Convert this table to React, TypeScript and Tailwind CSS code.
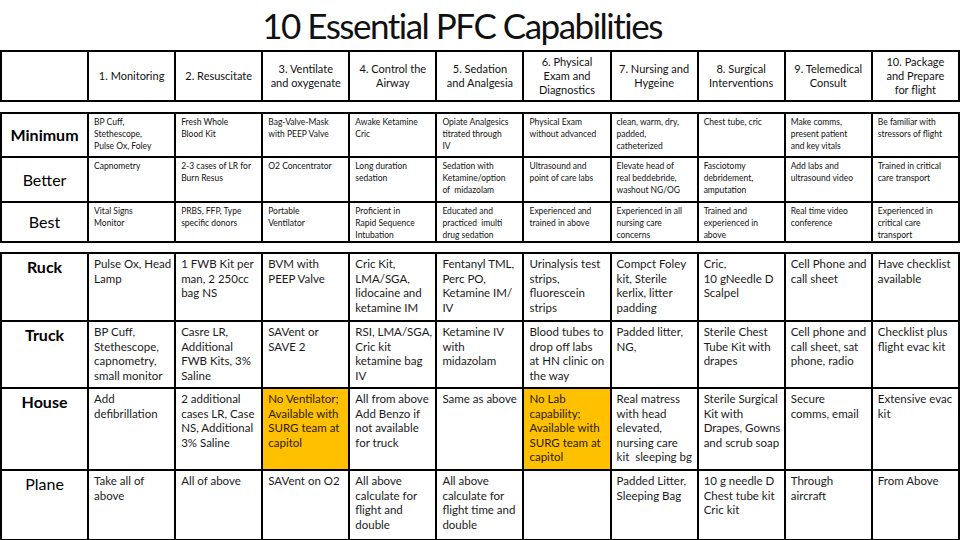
const header = [
  '',
  '1. Monitoring',
  '2. Resuscitate',
  '3. Ventilate|and oxygenate',
  '4. Control the|Airway',
  '5. Sedation|and Analgesia',
  '6. Physical|Exam and|Diagnostics',
  '7. Nursing and|Hygeine',
  '8. Surgical|Interventions',
  '9. Telemedical|Consult',
  '10. Package|and Prepare|for flight',
];

type Row = { label: string; bold?: boolean; h: string; cells: string[]; hl?: number[] };

const levels: Row[] = [
  {
    label: 'Minimum',
    bold: true,
    h: 'h-[44px]',
    cells: [
      'BP Cuff,|Stethescope,|Pulse Ox, Foley',
      'Fresh Whole|Blood Kit',
      'Bag-Valve-Mask|with PEEP Valve',
      'Awake Ketamine|Cric',
      'Opiate Analgesics|titrated through|IV',
      'Physical Exam|without advanced',
      'clean, warm, dry,|padded,|catheterized',
      'Chest tube, cric',
      'Make comms,|present patient|and key vitals',
      'Be familiar with|stressors of flight',
    ],
  },
  {
    label: 'Better',
    h: 'h-[45px]',
    cells: [
      'Capnometry',
      '2-3 cases of LR for|Burn Resus',
      'O2 Concentrator',
      'Long duration|sedation',
      'Sedation with|Ketamine/option|of  midazolam',
      'Ultrasound and|point of care labs',
      'Elevate head of|real beddebride,|washout NG/OG',
      'Fasciotomy|debridement,|amputation',
      'Add labs and|ultrasound video',
      'Trained in critical|care transport',
    ],
  },
  {
    label: 'Best',
    h: 'h-[40px]',
    cells: [
      'Vital Signs|Monitor',
      'PRBS, FFP, Type|specific donors',
      'Portable|Ventilator',
      'Proficient in|Rapid Sequence|Intubation',
      'Educated and|practiced  imulti|drug sedation',
      'Experienced and|trained in above',
      'Experienced in all|nursing care|concerns',
      'Trained and|experienced in|above',
      'Real time video|conference',
      'Experienced in|critical care|transport',
    ],
  },
];

const settings: Row[] = [
  {
    label: 'Ruck',
    bold: true,
    h: 'h-[68px]',
    cells: [
      'Pulse Ox, Head|Lamp',
      '1 FWB Kit per|man, 2 250cc|bag NS',
      'BVM with|PEEP Valve',
      'Cric Kit,|LMA/SGA,|lidocaine and|ketamine IM',
      'Fentanyl TML,|Perc PO,|Ketamine IM/|IV',
      'Urinalysis test|strips,|fluorescein|strips',
      'Compct Foley|kit, Sterile|kerlix, litter|padding',
      'Cric,|10 gNeedle D|Scalpel',
      'Cell Phone and|call sheet',
      'Have checklist|available',
    ],
  },
  {
    label: 'Truck',
    bold: true,
    h: 'h-[67px]',
    cells: [
      'BP Cuff,|Stethescope,|capnometry,|small monitor',
      'Casre LR,|Additional|FWB Kits, 3%|Saline',
      'SAVent or|SAVE 2',
      'RSI, LMA/SGA,|Cric kit|ketamine bag|IV',
      'Ketamine IV|with|midazolam',
      'Blood tubes to|drop off labs|at HN clinic on|the way',
      'Padded litter,|NG,',
      'Sterile Chest|Tube Kit with|drapes',
      'Cell phone and|call sheet, sat|phone, radio',
      'Checklist plus|flight evac kit',
    ],
  },
  {
    label: 'House',
    bold: true,
    h: 'h-[82px]',
    hl: [2, 5],
    cells: [
      'Add|defibrillation',
      '2 additional|cases LR, Case|NS, Additional|3% Saline',
      'No Ventilator;|Available with|SURG team at|capitol',
      'All from above|Add Benzo if|not available|for truck',
      'Same as above',
      'No Lab|capability;|Available with|SURG team at|capitol',
      'Real matress|with head|elevated,|nursing care|kit  sleeping bg',
      'Sterile Surgical|Kit with|Drapes, Gowns|and scrub soap',
      'Secure|comms, email',
      'Extensive evac|kit',
    ],
  },
  {
    label: 'Plane',
    h: 'h-[70px]',
    cells: [
      'Take all of|above',
      'All of above',
      'SAVent on O2',
      'All above|calculate for|flight and|double',
      'All above|calculate for|flight time and|double',
      '',
      'Padded Litter,|Sleeping Bag',
      '10 g needle D|Chest tube kit|Cric kit',
      'Through|aircraft',
      'From Above',
    ],
  },
];

function Lines({ text }: { text: string }) {
  const parts = text.split('|');
  return (
    <>
      {parts.map((p, i) => (
        <div key={i} className="whitespace-pre">
          {p}
        </div>
      ))}
    </>
  );
}

export default function App() {
  return (
    <div className="w-[960px] h-[540px] bg-white text-black overflow-hidden font-['Lato',_'Liberation_Sans',_sans-serif]">
      {/* Title */}
      <div className="h-[50px] flex items-center justify-center pr-[36px]">
        <h1 className="text-[35px] leading-none tracking-[-1.5px] text-[#111]">10 Essential PFC Capabilities</h1>
      </div>

      {/* Capability headers */}
      <table className="w-full table-fixed border-collapse">
        <tbody>
          <tr className="h-[50px]">
            {header.map((h, i) => (
              <td
                key={i}
                className="border-2 border-black text-center align-middle text-[11px] leading-[14px] text-[#111]"
              >
                <Lines text={h} />
              </td>
            ))}
          </tr>
        </tbody>
      </table>

      {/* Minimum / Better / Best */}
      <table className="mt-[10px] w-full table-fixed border-collapse">
        <tbody>
          {levels.map((r) => (
            <tr key={r.label} className={r.h}>
              <td
                className={`border-2 border-black text-center align-middle text-[16px] ${
                  r.bold ? 'font-bold' : ''
                }`}
              >
                {r.label}
              </td>
              {r.cells.map((c, i) => (
                <td
                  key={i}
                  className="border-2 border-black align-top px-[5px] pt-[2px] text-[8.5px] leading-[12px] text-[#111]"
                >
                  <Lines text={c} />
                </td>
              ))}
            </tr>
          ))}
        </tbody>
      </table>

      {/* Ruck / Truck / House / Plane */}
      <table className="mt-[9px] w-full table-fixed border-collapse">
        <tbody>
          {settings.map((r) => (
            <tr key={r.label} className={r.h}>
              <td
                className={`border-2 border-black text-center align-top pt-[3px] text-[16px] leading-[20px] ${
                  r.bold ? 'font-bold' : ''
                }`}
              >
                {r.label}
              </td>
              {r.cells.map((c, i) => (
                <td
                  key={i}
                  className={`border-2 border-black align-top px-[5px] pt-[3px] text-[11.5px] leading-[14.5px] ${
                    r.hl?.includes(i) ? 'bg-[#ffc000] text-[#2a2000]' : 'text-[#1a1a1a]'
                  }`}
                >
                  <Lines text={c} />
                </td>
              ))}
            </tr>
          ))}
        </tbody>
      </table>
    </div>
  );
}
